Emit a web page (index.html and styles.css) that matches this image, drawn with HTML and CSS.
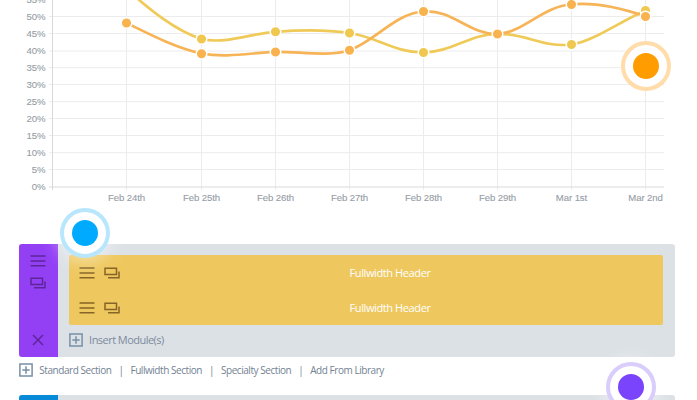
FILE: index.html
```html
<!DOCTYPE html>
<html lang="en">
<head>
<meta charset="utf-8">
<title>Split testing</title>
<link rel="stylesheet" href="styles.css">
</head>
<body>
<svg class="defs" width="0" height="0" aria-hidden="true">
  <symbol id="menu" viewBox="0 0 16 12"><path d="M.5 1h15M.5 6h15M.5 10.7h15"/></symbol>
  <symbol id="copy" viewBox="0 0 16 12"><path d="M1 1.3h11.5v6.2H1zM15 4.5v6.3H4"/></symbol>
  <symbol id="close" viewBox="0 0 12 12"><path d="M1 1l10 10M11 1L1 11"/></symbol>
  <symbol id="plus" viewBox="0 0 14 14"><path d="M.9.9h12.2v12.2H.9zM7 3.3v7.4M3.3 7h7.4"/></symbol>
</svg>
<main class="page">
  <svg class="chart" width="697" height="244" viewBox="0 0 697 244">
    <g class="grid">
      <path d="M49 16.5H664M49 33.5H664M49 51H664M49 67.7H664M49 84.5H664M49 101.7H664M49 118.5H664M49 135.5H664M49 152.7H664M49 169.5H664"/>
      <path d="M126.5 0V190M201.5 0V190M275.5 0V190M349.5 0V190M423.5 0V190M497.5 0V190M571.5 0V190M645.5 0V190"/>
    </g>
    <path class="axis" d="M52.5 0V190M49 187H664"/>
    <g class="ylabels">
      <text x="45.5" y="3">55%</text><text x="45.5" y="20">50%</text><text x="45.5" y="37">45%</text><text x="45.5" y="54.2">40%</text><text x="45.5" y="71">35%</text><text x="45.5" y="88">30%</text><text x="45.5" y="105.2">25%</text><text x="45.5" y="122">20%</text><text x="45.5" y="139">15%</text><text x="45.5" y="156">10%</text><text x="45.5" y="173">5%</text><text x="45.5" y="190.2">0%</text>
    </g>
    <g class="xlabels">
      <text x="126.5" y="201.2">Feb 24th</text><text x="201.5" y="201.2">Feb 25th</text><text x="275.5" y="201.2">Feb 26th</text><text x="349.5" y="201.2">Feb 27th</text><text x="423.5" y="201.2">Feb 28th</text><text x="497.5" y="201.2">Feb 29th</text><text x="571.5" y="201.2">Mar 1st</text><text x="645.5" y="201.2">Mar 2nd</text>
    </g>
    <path class="line yellow" d="M126.5-11C150 10 176 31 201.5 39C226 44.5 250 33.5 275.5 31.8C300 30 325 29.5 349.5 33C377 37 396 53 423.5 52.5C452 52 470 34 497.5 33.8C525 33 543 48 571.5 44.5C593 41.5 619 22 645.5 10.5"/>
    <path class="line orange" d="M126.5 23C150 34.5 176 48 201.5 53.5C226 58 250 53 275.5 51.8C300 51.5 329 57 349.5 50.2C375 41 396 13 423.5 11.5C452 9 470 35 497.5 34C523 33 543 6 571.5 4.5C596 2 621 8 645.5 16.5"/>
    <g class="dots yellow">
      <circle cx="201.5" cy="39" r="5.3"/><circle cx="275.5" cy="31.8" r="5.3"/><circle cx="349.5" cy="33" r="5.3"/><circle cx="423.5" cy="52.5" r="5.3"/><circle cx="571.5" cy="44.5" r="5.3"/><circle cx="645.5" cy="10.5" r="5.3"/>
    </g>
    <g class="dots orange">
      <circle cx="126.5" cy="23" r="5.3"/><circle cx="201.5" cy="53.7" r="5.3"/><circle cx="275.5" cy="52" r="5.3"/><circle cx="349.5" cy="50.2" r="5.3"/><circle cx="423.5" cy="11.5" r="5.3"/><circle cx="497.5" cy="34" r="5.3"/><circle cx="571.5" cy="4.5" r="5.3"/><circle cx="645.5" cy="16.5" r="5.3"/>
    </g>
  </svg>

  <section class="section">
    <div class="handle">
      <svg class="icon menu"><use href="#menu"/></svg>
      <svg class="icon copy"><use href="#copy"/></svg>
      <svg class="icon close"><use href="#close"/></svg>
    </div>
    <div class="content">
      <div class="modules">
        <div class="module"><svg class="icon"><use href="#menu"/></svg><svg class="icon"><use href="#copy"/></svg><span class="name">Fullwidth Header</span></div>
        <div class="module"><svg class="icon"><use href="#menu"/></svg><svg class="icon"><use href="#copy"/></svg><span class="name">Fullwidth Header</span></div>
      </div>
      <div class="insert"><svg class="plus"><use href="#plus"/></svg><span>Insert Module(s)</span></div>
    </div>
  </section>
  <nav class="actions">
    <svg class="plus"><use href="#plus"/></svg>
    <span>Standard Section</span><i>|</i><span>Fullwidth Section</span><i>|</i><span>Specialty Section</span><i>|</i><span>Add From Library</span>
  </nav>
  <section class="section next"><div class="handle"></div></section>

  <span class="marker amber"></span>
  <span class="marker blue"></span>
  <span class="marker violet"></span>
</main>
</body>
</html>
```
FILE: styles.css
```css
* { box-sizing: border-box; }
body { margin: 0; background: #fff; font-family: "Open Sans", sans-serif; }
.page { position: relative; width: 697px; height: 400px; overflow: hidden; }
.defs { position: absolute; }
.chart { display: block; }
.grid path { fill: none; stroke: #ececed; stroke-width: 1; }
.axis { fill: none; stroke: #d8d9da; stroke-width: 1; }
.chart text { font: 9.6px "Liberation Sans", Arial, sans-serif; letter-spacing: -.1px; fill: #959da6; stroke: #959da6; stroke-width: .1; }
.ylabels { text-anchor: end; }
.xlabels { text-anchor: middle; }
.line { fill: none; stroke-width: 2.7; }
.line.yellow { stroke: #f0ca58; }
.line.orange { stroke: #f7b456; }
.dots { stroke: #fff; stroke-width: 1.5; }
.dots.yellow { fill: #f0c850; }
.dots.orange { fill: #f8b24e; }

.section { display: flex; width: 655.5px; height: 112.5px; margin-left: 19.3px; background: #dce1e6; border-radius: 3px; overflow: hidden; }
.handle { display: flex; flex-direction: column; align-items: center; width: 38.3px; padding: 10.5px 0; background: #9340f5; }
.icon { display: block; flex: none; width: 16px; height: 12px; fill: none; stroke: #866326; stroke-width: 1.5; }
.handle .icon { stroke: #5c2699; }
.handle .copy { margin-top: 10px; }
.handle .close { width: 12px; margin-top: auto; }
.content { flex: 1; padding: 11px 11.8px 0 11.5px; }
.modules { height: 70px; background: #eec85f; border-radius: 2px; }
.module { display: flex; align-items: center; gap: 8.5px; height: 35px; padding-left: 10px; }
.module .name { flex: 1; margin-right: 17px; padding-left: 6px; text-align: center; color: #fff; font-size: 11px; letter-spacing: -.4px; }
.insert { display: flex; align-items: center; gap: 6px; height: 30px; color: #7c8b9c; font-size: 11px; letter-spacing: -.54px; }
.insert span { margin-top: -2px; }
.plus { display: block; flex: none; width: 14px; height: 14px; fill: none; stroke: #7890a5; stroke-width: 1.5; }
.actions { display: flex; align-items: center; height: 27px; margin-left: 19.3px; color: #728293; font-size: 10px; letter-spacing: -.45px; }
.actions .plus { margin-right: 6px; }
.actions i { width: 19px; text-align: center; font-style: normal; }
.next { margin-top: 11px; }
.next .handle { background: #078bd8; }

.marker { position: absolute; width: 50px; height: 50px; border: 4px solid; border-radius: 50%; background: #fff; }
.marker::after { content: ""; position: absolute; inset: 8px; border-radius: 50%; background: var(--dot); }
.amber { --dot: #ff9d00; left: 621px; top: 41px; border-color: #ffdcaa; }
.blue { --dot: #00aaff; left: 60px; top: 208px; border-color: #b7e6fd; box-shadow: 0 0 16px 5px rgba(255,255,255,.4); }
.violet { --dot: #7944fb; left: 606px; top: 362px; border-color: #d8cdfb; box-shadow: 0 0 16px 5px rgba(255,255,255,.4); }
```
